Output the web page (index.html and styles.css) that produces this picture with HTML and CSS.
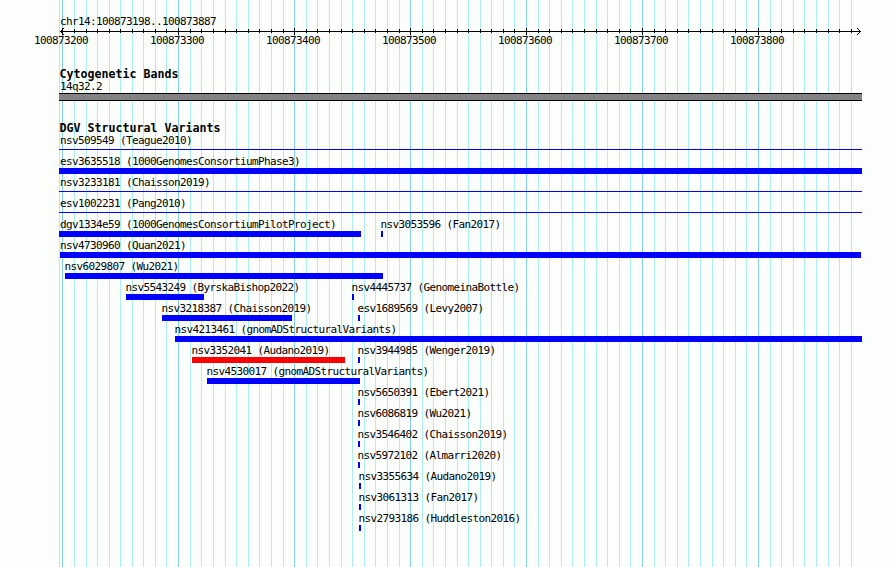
FILE: index.html
```html
<!DOCTYPE html>
<html lang="en">
<head>
    <meta charset="UTF-8">
    <title>chr14:100873198..100873887</title>
    <link rel="stylesheet" href="styles.css">
</head>
<body>
    <div id="browser">
        <svg class="grid" width="890" height="567" shape-rendering="crispEdges">
            <path class="minor" id="minor-lines"/>
            <path class="major" id="major-lines"/>
        </svg>

        <div class="tracks">
            <div class="region">chr14:100873198..100873887</div>
            <svg class="ruler" width="804" height="10" shape-rendering="crispEdges">
                <path d="M1 5.5H802"/>
                <path id="ticks"/>
                <path id="big-ticks"/>
                <path d="M1 5.5h1M2 4.5h1M2 6.5h1M3 3.5h1M3 7.5h1M4 2.5h1M4 8.5h1M801 5.5h1M800 4.5h1M800 6.5h1M799 3.5h1M799 7.5h1M798 2.5h1M798 8.5h1"/>
            </svg>
            <div class="scale">
                <span>100873200</span><span>100873300</span><span>100873400</span><span>100873500</span><span>100873600</span><span>100873700</span><span>100873800</span>
            </div>

            <h3 class="cytoband-title">Cytogenetic Bands</h3>
            <div class="label">14q32.2</div>
            <div class="cytoband"></div>

            <h3 class="variants-title">DGV Structural Variants</h3>
            <div id="variants"></div>
        </div>
    </div>

    <script src="browser.js"></script>
</body>
</html>
```

FILE: styles.css
```css
body {
    margin: 0;
    padding: 0;
    background-color: #FCFEFC;
    font-family: 'DejaVu Sans Mono', 'Liberation Mono', monospace;
    font-size: 11px;
    letter-spacing: -0.622px;
    color: #000;
}

#browser {
    display: grid;
    width: 890px;
    height: 567px;
    overflow: hidden;
}

.grid, .tracks {
    grid-area: 1 / 1;
}

.grid {
    display: block;
}

.minor {
    stroke: #AFEEEE;
}

.major {
    stroke: #87CEEB;
}

.tracks {
    padding: 15px 0 0 59px;
}

.region, .label {
    height: 13px;
    line-height: 13px;
    padding-left: 1px;
    white-space: pre;
}

.region {
    height: 11px;
}

.ruler {
    display: block;
    stroke: #000;
}

.scale {
    display: flex;
    height: 12px;
    line-height: 12px;
    margin: -1px 0 0 -56px;
}

.scale span {
    flex: none;
    width: 116px;
    text-align: center;
}

h3 {
    height: 12px;
    margin: 0;
    padding-left: 0.5px;
    line-height: 13px;
    font-size: 11.63px;
    font-weight: bold;
    letter-spacing: 0;
    white-space: pre;
}

.cytoband-title {
    margin-top: 21px;
}

.cytoband {
    box-sizing: border-box;
    width: 803px;
    height: 8px;
    background-color: #848284;
    border: solid #000;
    border-width: 1px 0;
}

.variants-title {
    margin-top: 21px;
}

/* one line of packed variants */
.row {
    display: grid;
    height: 21px;
}

.variant {
    grid-area: 1 / 1;
}

.variant .label {
    padding-left: 0;
}

.variant .label.edge {
    padding-left: 1px;
}

.bar {
    height: 6px;
    background-color: #0000FF;
}

.bar.thin {
    height: 1px;
    margin-top: 2px;
}

.bar.highlight {
    background-color: #FF0000;
}
```

FILE: browser.js
```javascript
// [name, start px, width px, bar class]
var rows = [
    [['nsv509549 (Teague2010)', 0, 803, 'thin']],
    [['esv3635518 (1000GenomesConsortiumPhase3)', 0, 803]],
    [['nsv3233181 (Chaisson2019)', 0, 803, 'thin']],
    [['esv1002231 (Pang2010)', 0, 803, 'thin']],
    [['dgv1334e59 (1000GenomesConsortiumPilotProject)', 0, 302], ['nsv3053596 (Fan2017)', 322, 2]],
    [['nsv4730960 (Quan2021)', 1, 801]],
    [['nsv6029807 (Wu2021)', 6, 318]],
    [['nsv5543249 (ByrskaBishop2022)', 67, 78], ['nsv4445737 (GenomeinaBottle)', 293, 2]],
    [['nsv3218387 (Chaisson2019)', 103, 130], ['esv1689569 (Levy2007)', 299, 2]],
    [['nsv4213461 (gnomADStructuralVariants)', 116, 687]],
    [['nsv3352041 (Audano2019)', 133, 153, 'highlight'], ['nsv3944985 (Wenger2019)', 299, 2]],
    [['nsv4530017 (gnomADStructuralVariants)', 148, 153]],
    [['nsv5650391 (Ebert2021)', 299, 2]],
    [['nsv6086819 (Wu2021)', 299, 2]],
    [['nsv3546402 (Chaisson2019)', 299, 2]],
    [['nsv5972102 (Almarri2020)', 299, 2]],
    [['nsv3355634 (Audano2019)', 300, 2]],
    [['nsv3061313 (Fan2017)', 300, 2]],
    [['nsv2793186 (Huddleston2016)', 300, 2]]
];

var html = '';
rows.forEach(function (row) {
    html += '<div class="row">';
    row.forEach(function (v) {
        // labels line up with the bar, or with the panel edge for clipped ones
        var edge = v[1] === 0 ? ' edge' : '';
        var shift = v[1] > 1 ? -0.5 : 0;
        html += '<div class="variant" style="margin-left:' + v[1] + 'px">' +
            '<div class="label' + edge + '" style="text-indent:' + shift + 'px">' + v[0] + '</div>' +
            '<div class="bar ' + (v[3] || '') + '" style="width:' + v[2] + 'px"></div></div>';
    });
    html += '</div>';
});
document.getElementById('variants').innerHTML = html;

// grid lines every 10 bases, heavier every 100
var steps = [
    [0, 12, 24, 35, 47, 58, 70, 81, 93, 104],
    [0, 12, 23, 35, 47, 58, 70, 81, 93, 105],
    [0, 12, 23, 35, 47, 58, 70, 81, 93, 105],
    [0, 12, 23, 35, 47, 58, 70, 81, 93, 104],
    [0, 12, 23, 35, 46, 58, 70, 81, 93, 104],
    [0, 12, 23, 35, 46, 58, 70, 81, 93, 104],
    [0, 12, 23, 35, 46, 58, 70, 81, 93]
];
var minor = 'M59.5 0V567', major = '', ticks = '', bigTicks = '';
steps.forEach(function (offsets, n) {
    offsets.forEach(function (offset) {
        var x = 62.5 + n * 116 + offset;
        if (offset === 0) {
            major += 'M' + x + ' 0V567';
            bigTicks += 'M' + (x - 59) + ' 2V9';
        } else {
            minor += 'M' + x + ' 0V567';
            ticks += 'M' + (x - 59) + ' 3V7';
        }
    });
});
document.getElementById('minor-lines').setAttribute('d', minor);
document.getElementById('major-lines').setAttribute('d', major);
document.getElementById('ticks').setAttribute('d', ticks);
document.getElementById('big-ticks').setAttribute('d', bigTicks);
```
